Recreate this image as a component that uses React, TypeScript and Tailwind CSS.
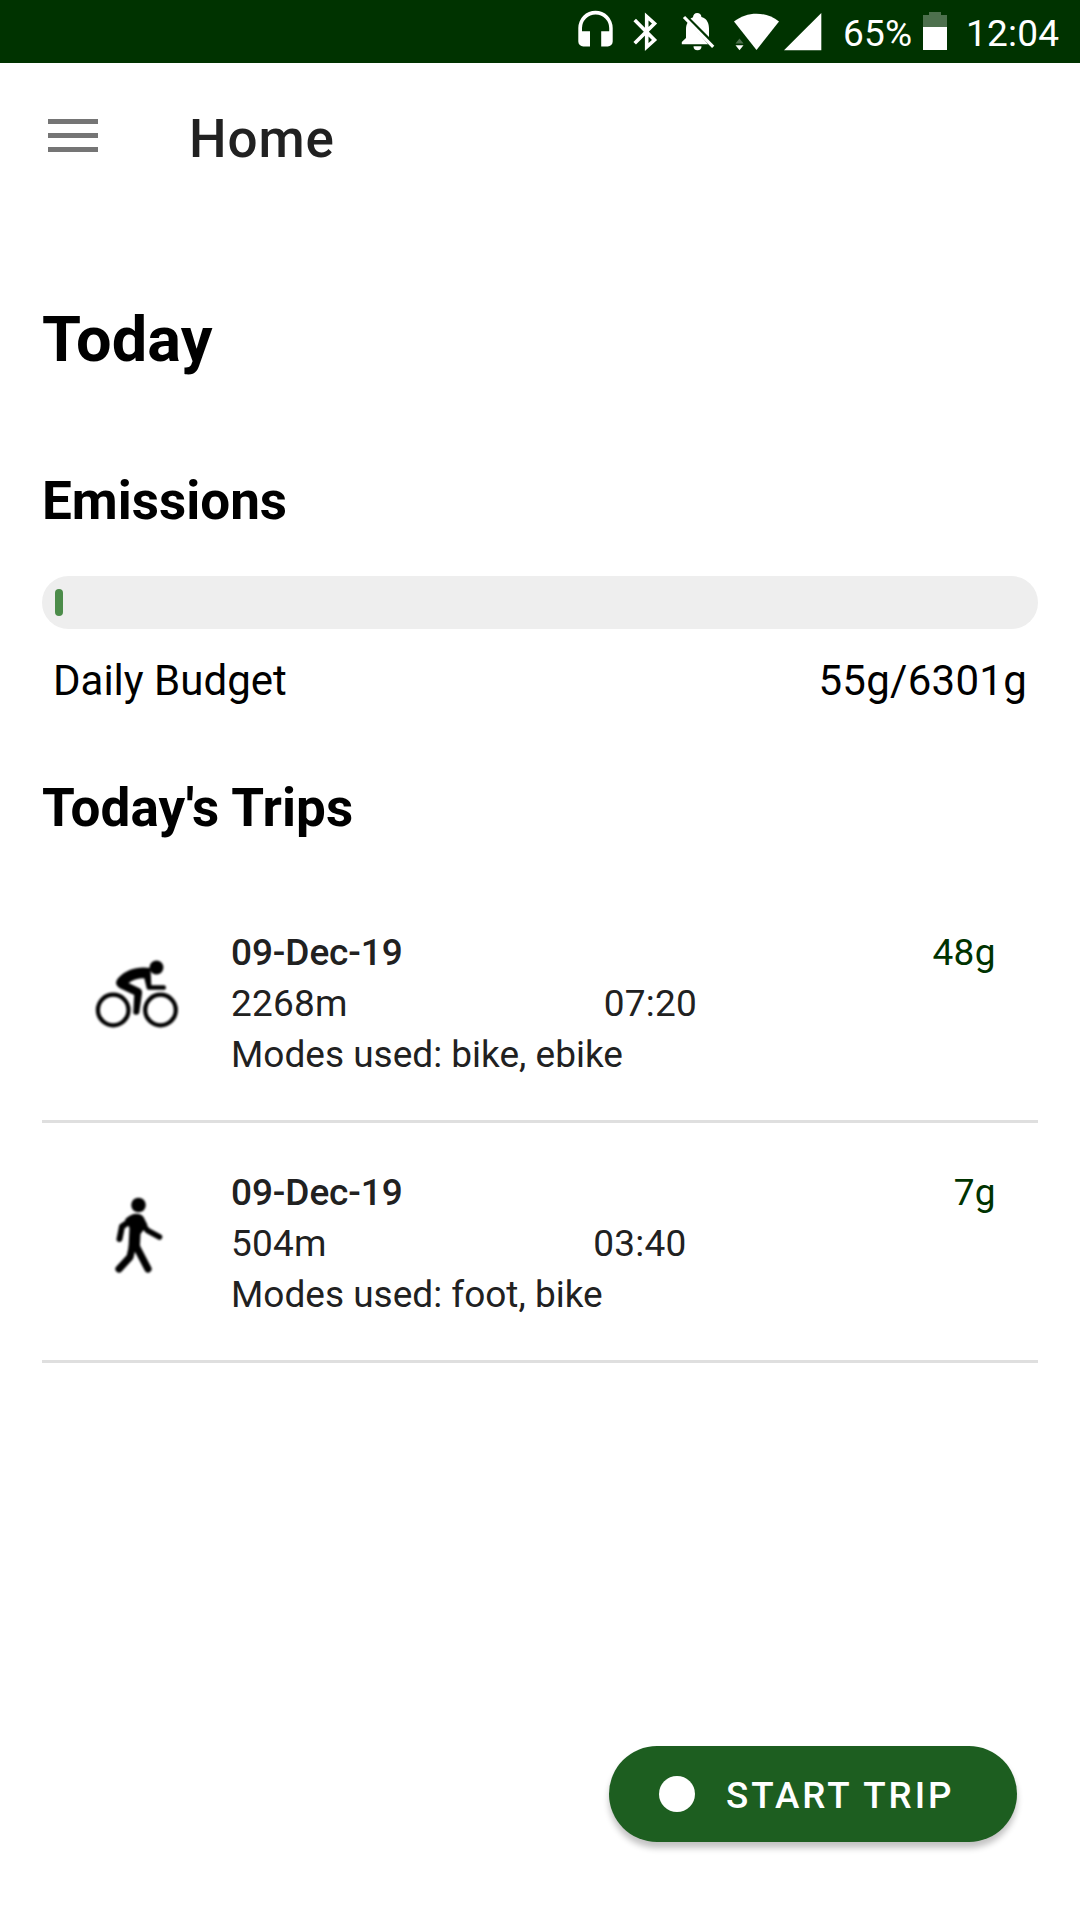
import React from "react";

type Trip = {
  date: string;
  distance: string;
  time: string;
  modes: string;
  grams: string;
  kind: "bike" | "foot";
};

const trips: Trip[] = [
  { date: "09-Dec-19", distance: "2268m", time: "07:20", modes: "bike, ebike", grams: "48g", kind: "bike" },
  { date: "09-Dec-19", distance: "504m", time: "03:40", modes: "foot, bike", grams: "7g", kind: "foot" },
];

function StatusIcons() {
  return (
    <svg className="h-[63px] w-[270px] shrink-0" viewBox="0 0 270 63" fill="#fff">
      <path d="M23 46.5h7V31.2h-8V28a13.6 13.6 0 0 1 27.200 0v3.200h-8V46.500h6.500a5 5 0 0 0 5-5V28a17.200 17.200 0 0 0-34.400 0v13.500a5 5 0 0 0 5 5z" />
      <path d="M74.700 20L94.500 40l-7.800 7V16.500l7.800 7L74.700 43.300" fill="none" stroke="#fff" strokeWidth="3.600" />
      <path d="M133 17.200a4.200 4.200 0 0 1 8.400-.2c6 1.500 7.600 7 7.600 11.500v8.400L130.500 18.500z" />
      <path d="M128.300 21.500c-1.800 2.500-2.300 5-2.300 8V38l-4.200 4v2.200h26.300zM133.500 46.200h8a4 4 0 0 1-8 0z" />
      <path d="M124 17l29.200 29.800" fill="none" stroke="#fff" strokeWidth="3.200" />
      <path d="M196.500 50L174 21.500c13-10.500 32-10.500 45 0z" />
      <path d="M175.500 43.500l4-5 4 5z" fill="#4d704d" />
      <path d="M175.500 45.300h8l-4 5z" />
      <path d="M224 50.300h37.300V13z" />
    </svg>
  );
}

function BatteryIcon() {
  return (
    <svg className="h-[63px] w-[24px] shrink-0" viewBox="0 0 24 63">
      <path d="M6 12h12v3h6v12.200H0V15h6z" fill="#4d704d" />
      <path d="M0 27h24v23H0z" fill="#fff" />
    </svg>
  );
}

function CyclistIcon() {
  return (
    <svg className="h-[72px] w-[86px] blur-[0.8px]" viewBox="0 0 86 72">
      <g fill="none" stroke="#000" strokeWidth="4.200">
        <circle cx="19.200" cy="54" r="15.300" />
        <circle cx="66.500" cy="54" r="15.300" />
      </g>
      <circle cx="62.500" cy="11.500" r="6.900" />
      <path d="M56.500 12c-13-2-24 1.500-31.500 9.200-4 4.300-4 8 1 11L40.200 39l-.9 17.500c0 3 5.500 3 6 0L48 37.500c.2-2.500-.3-3.800-2-5L34.500 27c4-3 9-4.800 15.800-4.800l2.200 9.300c.3 1.700 1 2.300 2.500 2.300h15c2.600 0 2.600-4.600 0-4.600H57.300z" />
    </svg>
  );
}

function WalkerIcon() {
  return (
    <svg className="ml-[3px] h-[80px] w-[56px] blur-[0.8px]" viewBox="0 0 56 80">
      <circle cx="28.500" cy="9" r="7.300" />
      <g fill="none" stroke="#000" strokeLinecap="round" strokeLinejoin="round">
        <path d="M23 23L12 30.500 9.500 43" strokeWidth="6" />
        <path d="M29 24l8.500 10.500L49.500 41" strokeWidth="5.600" />
        <path d="M23 48l-3 13L9 73" strokeWidth="7.200" />
        <path d="M25 48l13 25" strokeWidth="7.200" />
      </g>
      <path d="M15 23.500c6-6.500 14.500-7.500 18.500-2.500l4 8-7 9-.7 14H18.500l1-20z" />
    </svg>
  );
}

function TripRow({ trip }: { trip: Trip }) {
  return (
    <li className="flex h-[240px] border-b-[3px] border-[#dfdfdf] text-[37px] leading-[51px] text-[#212121]">
      <div className="flex w-[189px] shrink-0 justify-center pt-[73px]">
        {trip.kind === "bike" ? <CyclistIcon /> : <WalkerIcon />}
      </div>
      <div className="w-[765px] shrink-0 pt-[44px]">
        <div className="flex justify-between">
          <span className="font-medium tracking-[-0.1px]">{trip.date}</span>
          <span className="tracking-[0.4px] text-[#003300]">{trip.grams}</span>
        </div>
        <div className="flex w-[722px] tracking-[0.2px]">
          <span>{trip.distance}</span>
          <span className="flex-1 text-center">{trip.time}</span>
        </div>
        <div>Modes used: {trip.modes}</div>
      </div>
    </li>
  );
}

export default function App() {
  return (
    <div className="relative flex h-[1920px] w-[1080px] flex-col overflow-hidden bg-white font-['Roboto',sans-serif] text-black">
      <div className="flex h-[63px] shrink-0 items-center justify-end bg-[#003300] pr-[20px] text-[37px] leading-[60px] tracking-[0.2px] whitespace-nowrap text-white">
        <StatusIcons />
        <span className="ml-[13px] w-[68px] pt-[4px]">65%</span>
        <span className="ml-[12px] flex"><BatteryIcon /></span>
        <span className="ml-[19px] w-[94px] pt-[4px]">12:04</span>
      </div>
      <header className="flex h-[147px] shrink-0 items-center">
        <div className="mb-[2px] ml-[48px] flex w-[50px] flex-col gap-[9px]">
          <span className="h-[5px] bg-[#757575]" />
          <span className="h-[5px] bg-[#757575]" />
          <span className="h-[5px] bg-[#757575]" />
        </div>
        <h1 className="ml-[91px] pt-[5px] text-[53px] leading-[62px] font-medium tracking-[0.9px] text-[#212121]">Home</h1>
      </header>
      <main className="px-[42px] pt-[93px]">
        <h2 className="text-[63px] leading-[74px] font-bold tracking-[0.2px]">Today</h2>
        <h3 className="mt-[93px] text-[53px] leading-[62px] font-bold">Emissions</h3>
        <div className="mt-[44px] h-[53px] rounded-full bg-[#eeeeee] px-[13px] py-[13px]">
          <div className="h-[27px] w-[8px] rounded-[4px] bg-[#4c8c4a]" />
        </div>
        <div className="mt-[27px] flex justify-between px-[11px] text-[42px] leading-[50px]">
          <span>Daily Budget</span>
          <span className="tracking-[0.27px]">55g/6301g</span>
        </div>
        <h3 className="mt-[71px] text-[53px] leading-[62px] font-bold tracking-[0.1px]">Today's Trips</h3>
        <ul className="mt-[44px]">
          {trips.map((trip) => (
            <TripRow key={trip.kind} trip={trip} />
          ))}
        </ul>
      </main>
      <button className="absolute right-[63px] bottom-[78px] flex h-[96px] w-[408px] items-center rounded-full bg-[#1d5e20] pl-[50px] text-[36.75px] font-medium tracking-[0.082em] text-white shadow-[0_6px_6px_rgba(0,0,0,0.24)]">
        <span className="mb-[1px] h-[36px] w-[36px] rounded-full bg-white" />
        <span className="ml-[31px] pt-[3px] whitespace-nowrap">START TRIP</span>
      </button>
    </div>
  );
}
